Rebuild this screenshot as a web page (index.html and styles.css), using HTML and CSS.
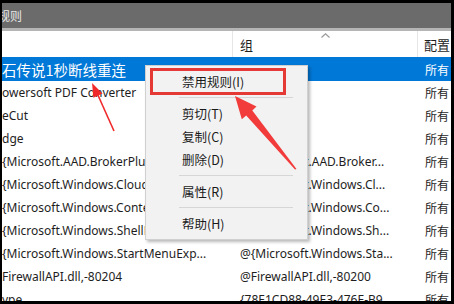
FILE: index.html
```html
<!DOCTYPE html>
<html lang="zh-CN">
<head>
<meta charset="utf-8">
<title>规则</title>
<link rel="stylesheet" href="styles.css">
</head>
<body>
<div class="screen">
  <div class="window">
    <div class="titlebar"><span class="title">规则</span></div>
    <div class="header">
      <div class="cell c1"></div>
      <div class="cell c2">组
        <svg class="sort" width="9" height="5" viewBox="0 0 9 5"><path d="M0.5 4.5 L4.5 0.8 L8.5 4.5" fill="none" stroke="#9a9a9a" stroke-width="1.2"/></svg>
      </div>
      <div class="cell c3">配置</div>
    </div>
    <div class="rows">
      <div class="row selected"><div class="cell c1 cjk">石传说1秒断线重连</div><div class="cell c2"></div><div class="cell c3">所有</div></div>
      <div class="row"><div class="cell c1">owersoft PDF Converter</div><div class="cell c2"></div><div class="cell c3">所有</div></div>
      <div class="row"><div class="cell c1">eCut</div><div class="cell c2"></div><div class="cell c3">所有</div></div>
      <div class="row"><div class="cell c1">dge</div><div class="cell c2"></div><div class="cell c3">所有</div></div>
      <div class="row"><div class="cell c1">{Microsoft.AAD.BrokerPlugin...</div><div class="cell c2">@{Microsoft.AAD.Broker...</div><div class="cell c3">所有</div></div>
      <div class="row"><div class="cell c1">{Microsoft.Windows.CloudExperienceHost...</div><div class="cell c2">@{Microsoft.Windows.Cl...</div><div class="cell c3">所有</div></div>
      <div class="row"><div class="cell c1">{Microsoft.Windows.ContentDeliveryManager...</div><div class="cell c2">@{Microsoft.Windows.Co...</div><div class="cell c3">所有</div></div>
      <div class="row"><div class="cell c1">{Microsoft.Windows.ShellExperienceHost...</div><div class="cell c2">@{Microsoft.Windows.Sh...</div><div class="cell c3">所有</div></div>
      <div class="row"><div class="cell c1">{Microsoft.Windows.StartMenuExp...</div><div class="cell c2">@{Microsoft.Windows.Sta...</div><div class="cell c3">所有</div></div>
      <div class="row"><div class="cell c1">FirewallAPI.dll,-80204</div><div class="cell c2">@FirewallAPI.dll,-80200</div><div class="cell c3">所有</div></div>
      <div class="row"><div class="cell c1">ype</div><div class="cell c2">{78E1CD88-49E3-476E-B9...</div><div class="cell c3">所有</div></div>
    </div>
    <div class="menu">
      <div class="item">禁用规则(I)</div>
      <div class="sep"></div>
      <div class="item">剪切(T)</div>
      <div class="item">复制(C)</div>
      <div class="item">删除(D)</div>
      <div class="sep"></div>
      <div class="item">属性(R)</div>
      <div class="sep"></div>
      <div class="item">帮助(H)</div>
    </div>
  </div>
  <svg class="notes" width="454" height="304" viewBox="0 0 454 304">
    <rect x="151.5" y="69.5" width="133" height="24" fill="none" stroke="#e53935" stroke-width="3"/>
    <line x1="114" y1="131" x2="97" y2="93" stroke="#f02a2a" stroke-width="1.6"/>
    <polygon points="92,83 102.5,93.5 93.4,97.8" fill="#f02a2a"/>
    <polygon points="235,96 256.5,106.5 252.3,110.5 296.5,169 295,169.5 246.2,115.6 241.8,119.2" fill="#f23b3b"/>
  </svg>
</div>
</body>
</html>
```
FILE: styles.css
```css
* { box-sizing: border-box; }
html, body { margin: 0; padding: 0; background: #000; }
body {
  width: 454px;
  height: 304px;
  overflow: hidden;
  font-family: "Noto Sans", "Noto Sans CJK SC", sans-serif;
  font-size: 12px;
  color: #1e1e1e;
}
.screen {
  position: relative;
  width: 454px;
  height: 304px;
  padding: 3px 3px 3px 2px;
}
.window {
  position: relative;
  width: 449px;
  height: 298px;
  background: #fff;
  overflow: hidden;
}
.titlebar {
  height: 28px;
  background: #6b6b6b;
  border-bottom: 3px solid #b5b5b5;
  display: flex;
  align-items: center;
  overflow: hidden;
}
.title {
  color: #e8e8e8;
  font-family: "Noto Sans CJK SC", sans-serif;
  font-size: 12px;
  margin-left: -4px;
}
.header {
  display: grid;
  grid-template-columns: 231px 185px 1fr;
  height: 26px;
  align-items: stretch;
}
.header .cell {
  display: flex;
  align-items: center;
  border-right: 1px solid #e6e6e6;
  position: relative;
  font-size: 13px;
  font-family: "Noto Sans CJK SC", sans-serif;
}
.header .c2 { padding-left: 7px; }
.header .c3 { padding-left: 6px; border-right: 0; white-space: nowrap; overflow: hidden; }
.sort {
  position: absolute;
  left: 88px;
  top: 2px;
}
.rows { display: flex; flex-direction: column; }
.row {
  display: grid;
  grid-template-columns: 231px 185px 1fr;
  height: 23px;
  align-items: center;
}
.row .cell {
  white-space: nowrap;
  overflow: hidden;
}
.row .c1 { padding-left: 0; }
.row .c1.cjk {
  font-family: "Noto Sans CJK SC", sans-serif;
  font-size: 14.5px;
}
.row .c2 { padding-left: 7px; }
.row .c3 { padding-left: 7px; font-family: "Noto Sans CJK SC", sans-serif; }
.row.selected {
  background: #0078d7;
  color: #fff;
  height: 24px;
}
.menu {
  position: absolute;
  left: 143px;
  top: 62px;
  width: 163px;
  height: 175px;
  background: #f2f2f2;
  border: 1px solid #d0d0d0;
  box-shadow: 2px 2px 3px rgba(0,0,0,0.28);
  padding: 4px 2px 4px 2px;
  font-family: "Noto Sans CJK SC", sans-serif;
  font-size: 12.5px;
}
.item {
  height: 23px;
  line-height: 23px;
  padding-left: 34px;
  color: #1a1a1a;
}
.sep {
  height: 9px;
  margin: 0 12px 0 31px;
  position: relative;
}
.sep::after {
  content: "";
  position: absolute;
  left: 0; right: 0; top: 4px;
  border-top: 1px solid #d6d6d6;
}
.notes {
  position: absolute;
  left: 0;
  top: 0;
  pointer-events: none;
}
```
